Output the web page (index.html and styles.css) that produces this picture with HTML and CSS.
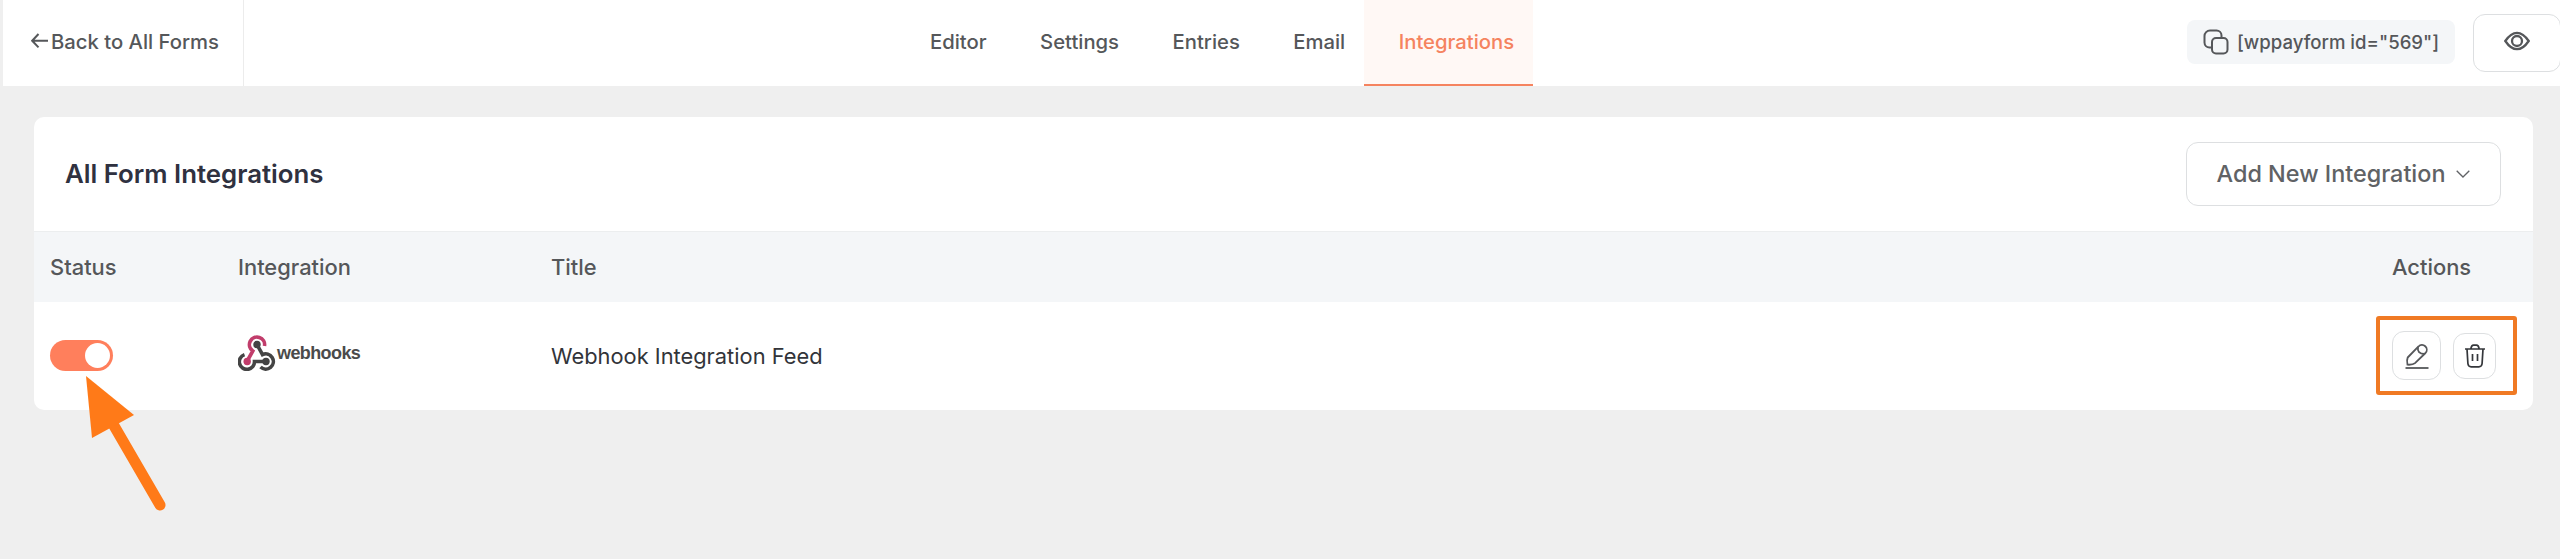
FILE: index.html
```html
<!DOCTYPE html>
<html lang="en">
<head>
<meta charset="utf-8">
<title>Form Integrations</title>
<link rel="stylesheet" href="styles.css">
</head>
<body>
<header class="topbar">
  <a class="back">
    <svg class="back-icon" viewBox="0 0 18 16"><path d="M17 7.700H1.200M7.500 1L1.200 7.700l6.300 6.700"/></svg>
    <span>Back to All Forms</span>
  </a>
  <nav class="tabs">
    <a class="tab">Editor</a>
    <a class="tab">Settings</a>
    <a class="tab">Entries</a>
    <a class="tab">Email</a>
    <a class="tab tab-active">Integrations</a>
  </nav>
  <div class="tools">
    <div class="shortcode">
      <svg class="copy-icon" viewBox="0 0 26 26"><path d="M9 18.500H6.500a5 5 0 0 1-5-5V7a5.500 5.500 0 0 1 5.500-5.500h6.500a5 5 0 0 1 5 5V9"/><rect x="9" y="9" width="15.500" height="15.500" rx="4"/></svg>
      <span>[wppayform id="569"]</span>
    </div>
    <button class="preview">
      <svg class="eye-icon" viewBox="0 0 26 20"><path d="M1.300 10C5 4.500 8.500 1.800 13 1.800S21 4.500 24.700 10C21 15.500 17.500 18.200 13 18.200S5 15.500 1.300 10z"/><circle cx="13" cy="10" r="5"/></svg>
    </button>
  </div>
</header>
<main class="card">
  <div class="card-head">
    <h1 class="card-title">All Form Integrations</h1>
    <button class="add">
      <span>Add New Integration</span>
      <svg class="chevron" viewBox="0 0 14 8"><path d="M.7.7L7 7l6.300-6.300"/></svg>
    </button>
  </div>
  <div class="row row-head">
    <div>Status</div>
    <div>Integration</div>
    <div>Title</div>
    <div>Actions</div>
  </div>
  <div class="row row-body">
    <div class="status">
      <span class="switch"><span class="knob"></span></span>
      <svg class="pointer" viewBox="0 0 84 140"><path class="shaft" d="M28 48L75 129"/><path class="tip" d="M1 0l48 39-42 23z"/></svg>
    </div>
    <div class="logo">
      <svg class="logo-mark" viewBox="0 0 38 36">
        <path class="dark" d="M19 9.500L24.500 19.600A7.600 7.600 0 1 1 22.500 32"/>
        <path class="dark" d="M6.500 19.600A7.600 7.600 0 1 0 16.500 26.500H28"/>
        <path class="pink" d="M26.500 11A7.600 7.600 0 1 0 14.800 16L9.200 26"/>
        <circle class="dark-dot" cx="19" cy="9.500" r="3.700"/><circle class="pink-dot" cx="9.200" cy="26.500" r="3.700"/><circle class="dark-dot" cx="28" cy="26.500" r="3.700"/>
      </svg>
      <span class="logo-text">webhooks</span>
    </div>
    <div class="feed">Webhook Integration Feed</div>
    <div class="actions">
      <button class="act act-edit"><svg viewBox="0 0 24 26"><path d="M2.700 14.500L13.500 3.500a4.700 4.700 0 0 1 7 6.500L10 20.200q-2 1.800-7.500 1.500Q1.500 17 2.700 14.500z"/><path d="M13 4Q11.800 10.800 19.500 11"/><path d="M.5 25h23"/></svg></button>
      <button class="act act-delete"><svg viewBox="0 0 20 24"><path d="M0 5h20M5.800 5Q6.500 1.200 8.500 1.200h3Q13.500 1.200 14.200 5M2 5l.9 14.500q.3 3.300 3.300 3.300h7.600q3 0 3.300-3.300L18 5M7.500 10v7M12.500 10v7"/></svg></button>
      <span class="callout"></span>
    </div>
  </div>
</main>
</body>
</html>
```
FILE: styles.css
```css
* { box-sizing: border-box; }
body {
  margin: 0;
  height: 559px;
  overflow: hidden;
  background: #efefef;
  font-family: Inter, "Liberation Sans", sans-serif;
  color: #55575a;
}
svg { display: block; flex: none; fill: none; stroke: currentColor; stroke-width: 2; }
button { font: inherit; color: inherit; padding: 0; background: #fff; border: 1px solid #dddfe1; display: flex; align-items: center; justify-content: center; }
.topbar {
  height: 86px;
  margin-left: 3px;
  background: #fff;
  display: grid;
  grid-template-columns: 241px 1fr auto;
  font-size: 20.250px;
  font-weight: 500;
}
.back { display: flex; align-items: center; gap: 2px; padding: 0 0 3px 28px; border-right: 1px solid #ececec; white-space: nowrap; }
.back-icon { width: 18px; height: 16px; margin-top: -1px; }
.tabs { display: flex; padding-left: 651px; }
.tab { display: flex; align-items: center; padding: 0 18.500px 3px 35px; white-space: nowrap; }
.tab-active { color: #f5835f; background: #fff8f5; border-bottom: 2px solid #f5835f; padding-bottom: 1px; }
.tools { display: flex; align-items: flex-start; gap: 18px; }
.shortcode { display: flex; align-items: center; gap: 8px; width: 268px; height: 44px; margin-top: 20px; padding-left: 16px; border-radius: 8px; background: #f4f6f8; font-size: 18.600px; white-space: nowrap; }
.copy-icon { width: 26px; height: 26px; }
.preview { width: 88px; height: 58px; margin: 14px -1px 0 0; border-radius: 12px; }
.eye-icon { width: 26px; height: 20px; margin-top: -5px; stroke-width: 2.300; }
.card { width: 2499px; height: 293px; margin: 31px 0 0 34px; background: #fff; border-radius: 10px; }
.card-head { height: 114px; display: flex; align-items: center; justify-content: space-between; padding: 0 32px 1px 31px; }
.card-title { margin: 0; font-size: 25.800px; font-weight: 600; color: #2f3140; }
.add { width: 315px; height: 64px; gap: 11px; border-radius: 12px; font-size: 23.400px; font-weight: 500; color: #606265; }
.chevron { width: 14px; height: 8px; stroke-width: 1.300; }
.row { display: grid; grid-template-columns: 188px 313px 1841px 1fr; padding-left: 16px; align-items: center; }
.row-head { height: 71px; background: #f4f6f8; border-top: 1px solid #eceeef; font-size: 21.900px; font-weight: 500; padding-bottom: 1px; }
.row-body { height: 107px; }
.status, .actions { position: relative; }
.switch { display: flex; justify-content: flex-end; width: 63px; height: 31px; padding: 3px; border-radius: 16px; background: #ff7f5c; }
.knob { width: 25px; height: 25px; border-radius: 50%; background: #fff; }
.pointer { position: absolute; left: 35px; top: 36px; width: 84px; height: 140px; color: #ff7a18; }
.shaft { stroke-width: 11; stroke-linecap: round; }
.tip { fill: currentColor; stroke: none; }
.logo { display: flex; align-items: center; gap: 1px; margin-top: -5px; }
.logo-mark { width: 38px; height: 36px; stroke-width: 3.600; color: #444; }
.pink { stroke: #c13d6b; }
.pink-dot { fill: #c13d6b; stroke: none; }
.dark-dot { fill: #444; stroke: none; }
.logo-text { font: bold 18px "Liberation Sans", sans-serif; letter-spacing: -.600px; color: #4b4b4b; }
.feed { font-size: 21.850px; color: #323439; }
.actions { display: flex; align-items: center; gap: 12px; }
.act { border-radius: 12px; }
.act-edit { width: 49px; height: 49px; }
.act-edit svg { width: 24px; height: 26px; stroke-width: 1.800; }
.act-delete { width: 43px; height: 46px; }
.act-delete svg { width: 20px; height: 24px; color: #35373b; stroke-width: 1.700; }
.callout { position: absolute; left: -16px; top: -15px; width: 141px; height: 79px; border: 4px solid #f07a24; border-radius: 3px; }
```
